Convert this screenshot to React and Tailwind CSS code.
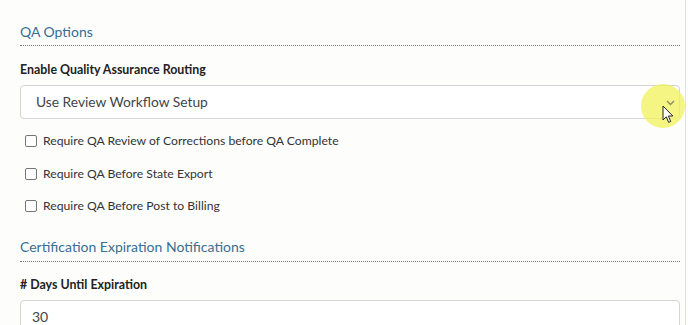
import React from "react";

function Check({ label }) {
  return (
    <div className="flex h-[32.5px] items-center pl-[5px]">
      <span className="h-[12px] w-[12px] rounded-[2px] border border-[#767676] bg-white" />
      <span className="ml-[6px] text-[12.2px] leading-[16px] text-[#333333]">{label}</span>
    </div>
  );
}

export default function App() {
  return (
    <div
      className="relative h-[325px] w-[688px] overflow-hidden bg-[#fdfdfc]"
      style={{ fontFamily: 'Lato, "Noto Sans", sans-serif' }}
    >
      <div className="absolute right-[2px] top-0 h-full w-px bg-[#e2e2e2]" />
      <div className="flex flex-col pl-[20px] pr-[8px] pt-[22px]">
        <div className="border-b border-dotted border-[#7a7a7a] pb-[3px] text-[14px] leading-[20px] text-[#3a6d92]">
          QA Options
        </div>
        <div className="mt-[15px] text-[12.4px] font-bold leading-[18px] text-[#222222]">
          Enable Quality Assurance Routing
        </div>
        <div className="mt-[6px] flex h-[34px] items-center justify-between rounded-[4px] border border-[#d4d4d4] bg-white pl-[15px] pr-[4px]">
          <span className="text-[13.8px] text-[#444444]">Use Review Workflow Setup</span>
          <svg width="9" height="6" viewBox="0 0 9 6" className="relative z-10 mt-[1px]">
            <path d="M1 1 L4.5 4.5 L8 1" fill="none" stroke="#8a8a5a" strokeWidth="1.3" />
          </svg>
        </div>
        <div className="mt-[6px] flex flex-col">
          <Check label="Require QA Review of Corrections before QA Complete" />
          <Check label="Require QA Before State Export" />
          <Check label="Require QA Before Post to Billing" />
        </div>
        <div className="mt-[14px] border-b border-dotted border-[#7a7a7a] pb-[4px] text-[14px] leading-[20px] text-[#3a6d92]">
          Certification Expiration Notifications
        </div>
        <div className="mt-[14px] text-[12.4px] font-bold leading-[18px] text-[#222222]">
          # Days Until Expiration
        </div>
        <div className="mt-[6px] flex h-[34px] items-center rounded-[4px] border border-[#d4d4d4] bg-white pl-[11px]">
          <span className="text-[14px] text-[#444444]">30</span>
        </div>
      </div>
      <div className="pointer-events-none absolute left-[641px] top-[84px] h-[44px] w-[44px] rounded-full bg-[#f2f25a] opacity-75" />
      <svg className="absolute left-[662px] top-[105px]" width="13" height="19" viewBox="0 0 13 19">
        <path d="M1 1 L1 15 L4.3 11.8 L6.6 17.4 L8.7 16.5 L6.4 11 L10.8 11 Z" fill="#fff" stroke="#222" strokeWidth="1" strokeLinejoin="round" />
      </svg>
    </div>
  );
}
